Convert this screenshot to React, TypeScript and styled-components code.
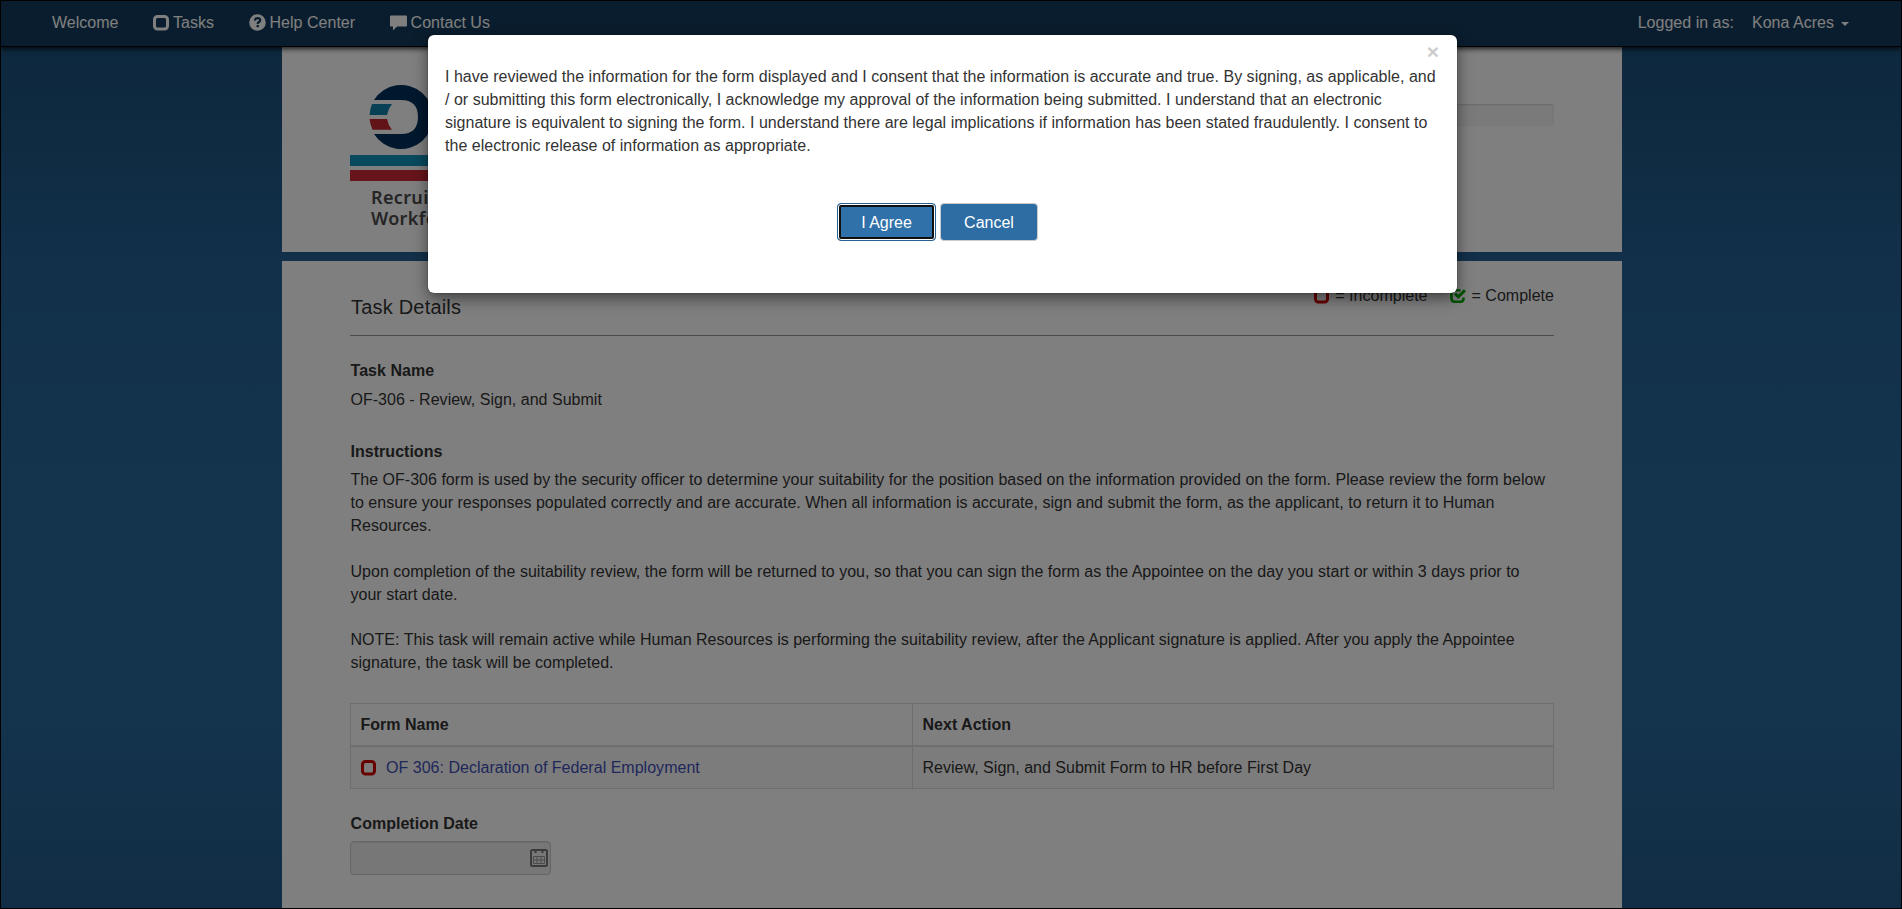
import React from "react";
import styled, { createGlobalStyle } from "styled-components";

const Global = createGlobalStyle`
  *, *::before, *::after { box-sizing: border-box; }
  html, body { margin: 0; padding: 0; }
  body {
    font-family: "Liberation Sans", Arial, sans-serif;
    font-size: 16px;
    line-height: 23px;
    letter-spacing: 0.018px;
    color: #333;
    overflow: hidden;
  }
  p, h1, h2 { margin: 0; }
`;

const Page = styled.div`
  position: relative;
  height: 909px;
  overflow: hidden;
  background: linear-gradient(#1a507a 0, #1d5480 110px, #246094 260px, #286698 480px, #286698 720px, #245c8c 909px);
`;

const Top = styled.header`
  position: absolute;
  inset: 0 0 auto;
`;

const Navbar = styled.nav`
  display: flex;
  justify-content: space-between;
  height: 47px;
  padding: 11px 53px 0 52px;
  background: #143b5c;
  border-bottom: 1px solid #000;
  box-shadow: 0 1px 6px #000;
  color: #fff;
`;

const NavGroup = styled.div<{ $gap: number }>`
  display: flex;
  gap: ${(p) => p.$gap}px;
`;

const NavItem = styled.span`
  display: flex;
  align-items: center;
  height: 23px;
  gap: 4px;
  white-space: nowrap;
`;

const Caret = styled.span`
  border: 4px solid transparent;
  border-top-color: #fff;
  border-bottom: 0;
  margin: 2px 0 0 3px;
`;

const Column = styled.main`
  width: 1340px;
  margin-left: 282px;
  display: flex;
  flex-direction: column;
  gap: 9px;
`;

const Panel = styled.section<{ $h: number; $top: number }>`
  height: ${(p) => p.$h}px;
  padding: ${(p) => p.$top}px 68px 0;
  background: #fff;
`;

const Header = styled.div`
  display: flex;
  justify-content: space-between;
`;

const Brand = styled.div`
  width: 250px;
  margin-top: 29px;
  color: #4a4a4a;
  font: 600 18px/21px "Noto Sans", sans-serif;
  letter-spacing: 0.35px;

  svg { display: block; }
`;

const BrandText = styled.div`
  padding: 6px 0 0 21px;
`;

const Progress = styled.div`
  width: 500px;
  height: 22px;
  margin-top: 57px;
  border-radius: 4px;
  background: #f5f5f5;
  box-shadow: inset 0 1px 2px rgba(0, 0, 0, 0.15);
`;

const TitleRow = styled.div`
  display: flex;
  justify-content: space-between;
  height: 52px;
  border-bottom: 1px solid #999;
`;

const Title = styled.h1`
  font-size: 20px;
  font-weight: 400;
  line-height: 24px;
  letter-spacing: 0.2px;
  margin-top: 11px;
  padding-left: 1px;
`;

const Legend = styled.div`
  display: flex;
  gap: 22px;
`;

const LegendItem = styled.span`
  display: flex;
  align-items: center;
  height: 23px;
  gap: 6px;
`;

const Label = styled.h2<{ $mt: number }>`
  font-size: 16px;
  line-height: 23px;
  margin-top: ${(p) => p.$mt}px;
  padding-left: 0.6px;
`;

const Para = styled.p<{ $mt: number }>`
  margin-top: ${(p) => p.$mt}px;
  padding: 0 4px 0 0.5px;
`;

const Table = styled.div`
  margin-top: 29px;
  border: 1px solid #ddd;
`;

const Row = styled.div<{ $head?: boolean }>`
  display: grid;
  grid-template-columns: 561px 1fr;
  height: ${(p) => (p.$head ? 43 : 41)}px;
  font-weight: ${(p) => (p.$head ? 700 : 400)};
  background: ${(p) => (p.$head ? "#fff" : "#f9f9f9")};
  border-bottom: ${(p) => (p.$head ? "2px solid #ddd" : "0")};
`;

const Cell = styled.div`
  display: flex;
  align-items: center;
  gap: 10.5px;
  padding: 0 9.5px;
  & + & { border-left: 1px solid #ddd; }
`;

const FormLink = styled.a`
  color: #3f4fb5;
`;

const DateInput = styled.div`
  display: flex;
  align-items: center;
  justify-content: flex-end;
  width: 201px;
  height: 34px;
  margin-top: 6px;
  padding-right: 2px;
  border: 1px solid #ccc;
  border-radius: 4px;
  background: #eee;
  box-shadow: inset 0 1px 1px rgba(0, 0, 0, 0.08);
`;

const Backdrop = styled.div`
  position: absolute;
  inset: 0;
  background: rgba(0, 0, 0, 0.5);
`;

const Modal = styled.div`
  position: absolute;
  left: 428px;
  top: 35px;
  width: 1029px;
  height: 258px;
  padding: 4px 17px 0;
  border-radius: 6px;
  background: #fff;
  box-shadow: 0 5px 15px rgba(0, 0, 0, 0.5), 0 0 1px #000;
`;

const Close = styled.div`
  height: 26px;
  padding-right: 1px;
  text-align: right;
  font-weight: 700;
  font-size: 21px;
  line-height: 25px;
  color: #ccc;
`;

const Actions = styled.div`
  display: flex;
  gap: 4px;
  margin: 46px 0 0 392px;
`;

const Button = styled.button<{ $focus?: boolean }>`
  width: ${(p) => (p.$focus ? 99 : 98)}px;
  height: 38px;
  padding: 1px 0 0;
  font: 16px "Liberation Sans", Arial, sans-serif;
  color: #fff;
  background: ${(p) => (p.$focus ? "#3071a9" : "#2e6da4")};
  border: 1px solid ${(p) => (p.$focus ? "#286090" : "#ccc")};
  border-radius: 4px;
  box-shadow: ${(p) => (p.$focus ? "inset 0 0 0 1px #fff, inset 0 0 0 3px #101010" : "none")};
`;

const Frame = styled.div`
  position: absolute;
  inset: 0;
  border: 1px solid #000;
`;

const Box = ({ color, size = 16 }: { color: string; size?: number }) => (
  <svg width={size} height="16" viewBox={`0 0 ${size} 16`}>
    <rect x="1.5" y="1.5" width={size - 3} height="12.5" rx="3" fill="none" stroke={color} strokeWidth="3" />
  </svg>
);

const CheckBox = () => (
  <svg width="16" height="16" viewBox="0 0 16 16">
    <path d="M10.500 2.300H5Q1.500 2.300 1.500 5.500V10.500Q1.500 13.700 5 13.700H10.500Q13.500 13.700 13.500 10.500V9.500" fill="none" stroke="#00a800" strokeWidth="2.6" />
    <path d="M5 5.500L8.300 8.900L15 2.200" fill="none" stroke="#00a800" strokeWidth="3" />
  </svg>
);

const Help = () => (
  <svg width="17" height="17" viewBox="0 0 17 17">
    <circle cx="8.5" cy="8.5" r="8.3" fill="#fff" />
    <path d="M5.900 6.700Q6.100 4.200 8.600 4.200Q11.200 4.200 11.200 6.300Q11.200 7.500 9.700 8.300Q8.700 8.900 8.700 10" fill="none" stroke="#143b5c" strokeWidth="2.2" />
    <rect x="7.5" y="11" width="2.4" height="2.2" fill="#143b5c" />
  </svg>
);

const Chat = () => (
  <svg width="17" height="16" viewBox="0 0 17 16">
    <path d="M1 .5H16Q17 .5 17 1.500V10.500Q17 11.500 16 11.500H7L3 15.500V11.500H1Q0 11.500 0 10.500V1.500Q0 .5 1 .5Z" fill="#fff" />
  </svg>
);

const Calendar = () => (
  <svg width="18" height="18" viewBox="0 0 18 18">
    <rect x="1" y="1" width="16" height="16" rx="1.5" fill="#eee" stroke="#777" strokeWidth="2" />
    <path d="M5.500 0V4M12.500 0V4" stroke="#777" strokeWidth="2" />
    <path d="M3.500 7.500H14.500V14.500H3.500ZM3.500 11H14.500M7 7.500V14.500M11 7.500V14.500" fill="none" stroke="#999" />
  </svg>
);

const Logo = () => (
  <svg width="250" height="105" viewBox="0 0 250 105">
    <path d="M24 24A32 32 0 1 1 24 58H51Q68 58 68 41T51 24Z" fill="#00315a" />
    <path d="M22 28H42Q38 33 37 39H19.500Q20 33 22 28Z" fill="#1181aa" />
    <path d="M19.500 43H37Q38 49 42 53.700H22.500Q20 48 19.500 43Z" fill="#c22630" />
    <rect y="79" width="250" height="11" fill="#1293bd" />
    <rect y="94" width="250" height="11" fill="#cf2a36" />
  </svg>
);

export default function App() {
  return (
    <Page>
      <Global />
      <Column>
        <Panel $h={252} $top={47}>
          <Header>
            <Brand>
              <Logo />
              <BrandText>Recruitment<br />Workforce</BrandText>
            </Brand>
            <Progress />
          </Header>
        </Panel>
        <Panel $h={660} $top={23}>
          <TitleRow>
            <Title>Task Details</Title>
            <Legend>
              <LegendItem><Box color="#d00000" size={15} />= Incomplete</LegendItem>
              <LegendItem><CheckBox />= Complete</LegendItem>
            </Legend>
          </TitleRow>
          <Label $mt={23}>Task Name</Label>
          <Para $mt={6}>OF-306 - Review, Sign, and Submit</Para>
          <Label $mt={29}>Instructions</Label>
          <Para $mt={5}>
            The OF-306 form is used by the security officer to determine your suitability for the position based on the information provided on the form. Please review the form below to ensure your responses populated correctly and are accurate. When all information is accurate, sign and submit the form, as the applicant, to return it to Human Resources.
          </Para>
          <Para $mt={23}>
            Upon completion of the suitability review, the form will be returned to you, so that you can sign the form as the Appointee on the day you start or within 3 days prior to your start date.
          </Para>
          <Para $mt={22}>
            NOTE: This task will remain active while Human Resources is performing the suitability review, after the Applicant signature is applied. After you apply the Appointee signature, the task will be completed.
          </Para>
          <Table>
            <Row $head>
              <Cell>Form Name</Cell>
              <Cell>Next Action</Cell>
            </Row>
            <Row>
              <Cell><Box color="#d00000" size={15} /><FormLink>OF 306: Declaration of Federal Employment</FormLink></Cell>
              <Cell>Review, Sign, and Submit Form to HR before First Day</Cell>
            </Row>
          </Table>
          <Label $mt={23}>Completion Date</Label>
          <DateInput><Calendar /></DateInput>
        </Panel>
      </Column>
      <Top>
        <Navbar>
          <NavGroup $gap={34.5}>
            <NavItem>Welcome</NavItem>
            <NavItem><Box color="#fff" />Tasks</NavItem>
            <NavItem><Help />Help Center</NavItem>
            <NavItem><Chat />Contact Us</NavItem>
          </NavGroup>
          <NavGroup $gap={18}>
            <NavItem>Logged in as:</NavItem>
            <NavItem>Kona Acres <Caret /></NavItem>
          </NavGroup>
        </Navbar>
      </Top>
      <Backdrop />
      <Modal>
        <Close>×</Close>
        <p>
          I have reviewed the information for the form displayed and I consent that the information is accurate and true. By signing, as applicable, and / or submitting this form electronically, I acknowledge my approval of the information being submitted. I understand that an electronic signature is equivalent to signing the form. I understand there are legal implications if information has been stated fraudulently. I consent to the electronic release of information as appropriate.
        </p>
        <Actions>
          <Button $focus>I Agree</Button>
          <Button>Cancel</Button>
        </Actions>
      </Modal>
      <Frame />
    </Page>
  );
}
